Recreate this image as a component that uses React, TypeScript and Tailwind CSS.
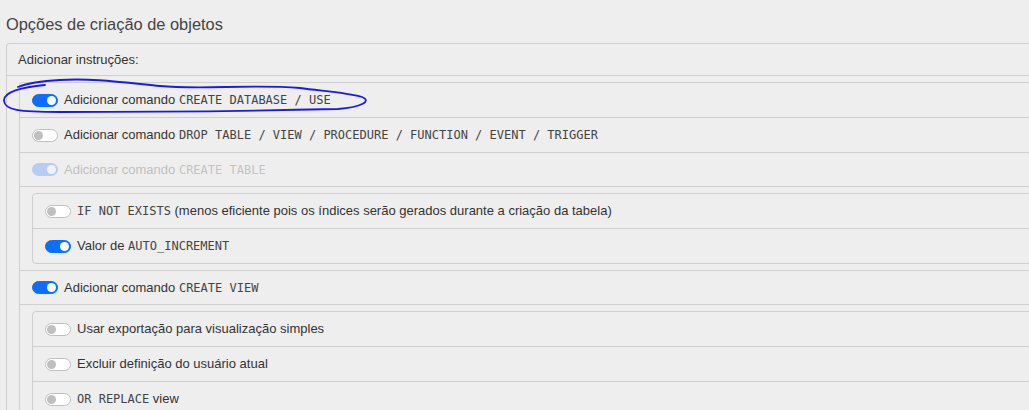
import type { ReactNode } from 'react'

type RowProps = {
    on?: boolean
    disabled?: boolean
    h?: string
    children: ReactNode
}

function Toggle({ on }: { on?: boolean }) {
    return (
        <span
            className={`flex h-[13px] w-[26px] shrink-0 items-center rounded-full border px-[1px] ${
                on ? 'justify-end border-[#0d6efd] bg-[#0d6efd]' : 'justify-start border-[#bfbfbf] bg-white'
            }`}
        >
            <span className={`h-[9px] w-[9px] rounded-full ${on ? 'bg-white' : 'bg-[#bfbfbf]'}`} />
        </span>
    )
}

function Code({ children }: { children: ReactNode }) {
    return <code className="font-['DejaVu_Sans_Mono',monospace] text-[12px] text-[#444]">{children}</code>
}

// heights are border-box, so they include the 1px bottom border
function Row({ on, disabled, h = 'h-[35px]', children }: RowProps) {
    return (
        <div className={`flex ${h} items-center gap-[6px] border-b border-[#cfcfcf] pl-[12px]`}>
            <div className={`flex items-center gap-[6px] ${disabled ? 'opacity-25' : ''}`}>
                <Toggle on={on} />
                <span className="whitespace-nowrap">{children}</span>
            </div>
        </div>
    )
}

function Nested({ children }: { children: ReactNode }) {
    return (
        <div className="border-b border-[#cfcfcf] py-[6px] pl-[12px]">
            <div className="overflow-hidden rounded-[4px] border border-[#cfcfcf] [&>div:last-child]:h-[34px] [&>div:last-child]:border-b-0">
                {children}
            </div>
        </div>
    )
}

export default function App() {
    return (
        <div className="relative h-[410px] w-full overflow-hidden bg-[#eeeeee] font-['Liberation_Sans',Arial,sans-serif] text-[13px] text-[#333]">
            <div className="h-[43px] pl-[6px] pt-[14px] text-[16.4px] leading-[20px] text-[#444]">
                Opções de criação de objetos
            </div>

            <div className="ml-[6px] mr-[-20px] rounded-tl-[4px] border-l border-t border-[#cfcfcf]">
                <div className="flex h-[32px] items-center border-b border-[#cfcfcf] pl-[11px]">
                    Adicionar instruções:
                </div>

                <div className="ml-[12px] mt-[6px] rounded-tl-[4px] border-l border-t border-[#cfcfcf]">
                    <Row on>
                        Adicionar comando <Code>CREATE DATABASE / USE</Code>
                    </Row>
                    <Row>
                        Adicionar comando <Code>DROP TABLE / VIEW / PROCEDURE / FUNCTION / EVENT / TRIGGER</Code>
                    </Row>
                    <Row on disabled h="h-[34px]">
                        Adicionar comando <Code>CREATE TABLE</Code>
                    </Row>
                    <Nested>
                        <Row>
                            <Code>IF NOT EXISTS</Code> (menos eficiente pois os índices serão gerados durante a criação da tabela)
                        </Row>
                        <Row on>
                            Valor de <Code>AUTO_INCREMENT</Code>
                        </Row>
                    </Nested>
                    <Row on h="h-[34px]">
                        Adicionar comando <Code>CREATE VIEW</Code>
                    </Row>
                    <Nested>
                        <Row>Usar exportação para visualização simples</Row>
                        <Row>Excluir definição do usuário atual</Row>
                        <Row>
                            <Code>OR REPLACE</Code> view
                        </Row>
                    </Nested>
                </div>
            </div>

            {/* hand-drawn marker around the first option */}
            <svg className="pointer-events-none absolute left-0 top-0" width="380" height="120" viewBox="0 0 380 120" fill="none">
                <path
                    d="M 45 85 C 22 87, 3 92, 4 101 C 5 110, 18 112, 60 112 C 150 112, 250 111, 338 109 C 362 107, 372 101, 362 97 C 345 92, 320 91, 300 88 C 250 84, 200 90, 160 86 C 120 82, 90 78, 60 80 C 42 81, 28 83, 18 87"
                    stroke="#1a1ae6"
                    strokeWidth="1.8"
                    strokeLinecap="round"
                />
            </svg>
        </div>
    )
}
